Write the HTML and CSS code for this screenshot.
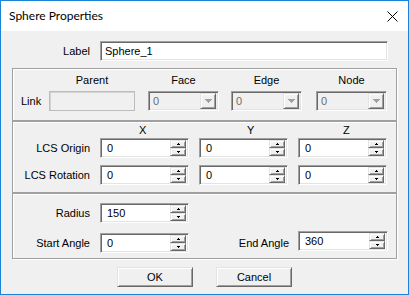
FILE: index.html
```
<!DOCTYPE html>
<html>
<head>
<meta charset="utf-8">
<title>Sphere Properties</title>
<link rel="stylesheet" href="styles.css">
</head>
<body>
<div class="window">
  <div class="titlebar">
    <span class="title">Sphere Properties</span>
    <svg class="close" width="11" height="11" viewBox="0 0 11 11"><path d="M0.5 0.5L10.5 10.5M10.5 0.5L0.5 10.5" stroke="#000" stroke-width="1" fill="none"/></svg>
  </div>
  <div class="client">
    <div class="label-row">
      <span class="rlabel">Label</span>
      <div class="edit sunken"><span class="val">Sphere_1</span></div>
    </div>

    <div class="group g-link">
      <div class="link-head">
        <span class="c-lbl"></span>
        <span class="c-parent hd">Parent</span>
        <span class="c-face hd">Face</span>
        <span class="c-edge hd">Edge</span>
        <span class="c-node hd">Node</span>
      </div>
      <div class="link-row">
        <span class="c-lbl link-lbl">Link</span>
        <div class="c-parent edit-dis"></div>
        <div class="c-face combo sunken"><span class="val">0</span><span class="dd raised"><svg width="7" height="4" viewBox="0 0 7 4"><path d="M0 0H7V1H6V2H5V3H4V4H3V3H2V2H1V1H0Z" fill="#a0a0a0"/></svg></span></div>
        <div class="c-edge combo sunken"><span class="val">0</span><span class="dd raised"><svg width="7" height="4" viewBox="0 0 7 4"><path d="M0 0H7V1H6V2H5V3H4V4H3V3H2V2H1V1H0Z" fill="#a0a0a0"/></svg></span></div>
        <div class="c-node combo sunken"><span class="val">0</span><span class="dd raised"><svg width="7" height="4" viewBox="0 0 7 4"><path d="M0 0H7V1H6V2H5V3H4V4H3V3H2V2H1V1H0Z" fill="#a0a0a0"/></svg></span></div>
      </div>
    </div>

    <div class="group g-lcs">
      <div class="lcs-head">
        <span></span>
        <span class="hx">X</span>
        <span class="hy">Y</span>
        <span class="hz">Z</span>
      </div>
      <div class="lcs-grid">
        <span class="rlabel">LCS Origin</span>
        <div class="spin sunken"><span class="val">0</span><span class="sbs"><span class="sb raised"><svg width="3" height="2" viewBox="0 0 3 2"><path d="M1 0H2V1H3V2H0V1H1Z"/></svg></span><span class="sb raised"><svg width="3" height="2" viewBox="0 0 3 2"><path d="M0 0H3V1H2V2H1V1H0Z"/></svg></span></span></div>
        <div class="spin sunken"><span class="val">0</span><span class="sbs"><span class="sb raised"><svg width="3" height="2" viewBox="0 0 3 2"><path d="M1 0H2V1H3V2H0V1H1Z"/></svg></span><span class="sb raised"><svg width="3" height="2" viewBox="0 0 3 2"><path d="M0 0H3V1H2V2H1V1H0Z"/></svg></span></span></div>
        <div class="spin sunken"><span class="val">0</span><span class="sbs"><span class="sb raised"><svg width="3" height="2" viewBox="0 0 3 2"><path d="M1 0H2V1H3V2H0V1H1Z"/></svg></span><span class="sb raised"><svg width="3" height="2" viewBox="0 0 3 2"><path d="M0 0H3V1H2V2H1V1H0Z"/></svg></span></span></div>

        <span class="rlabel">LCS Rotation</span>
        <div class="spin sunken"><span class="val">0</span><span class="sbs"><span class="sb raised"><svg width="3" height="2" viewBox="0 0 3 2"><path d="M1 0H2V1H3V2H0V1H1Z"/></svg></span><span class="sb raised"><svg width="3" height="2" viewBox="0 0 3 2"><path d="M0 0H3V1H2V2H1V1H0Z"/></svg></span></span></div>
        <div class="spin sunken"><span class="val">0</span><span class="sbs"><span class="sb raised"><svg width="3" height="2" viewBox="0 0 3 2"><path d="M1 0H2V1H3V2H0V1H1Z"/></svg></span><span class="sb raised"><svg width="3" height="2" viewBox="0 0 3 2"><path d="M0 0H3V1H2V2H1V1H0Z"/></svg></span></span></div>
        <div class="spin sunken"><span class="val">0</span><span class="sbs"><span class="sb raised"><svg width="3" height="2" viewBox="0 0 3 2"><path d="M1 0H2V1H3V2H0V1H1Z"/></svg></span><span class="sb raised"><svg width="3" height="2" viewBox="0 0 3 2"><path d="M0 0H3V1H2V2H1V1H0Z"/></svg></span></span></div>
      </div>
    </div>

    <div class="group g-sph">
      <span class="rlabel r1">Radius</span>
      <div class="spin sunken f1"><span class="val">150</span><span class="sbs"><span class="sb raised"><svg width="3" height="2" viewBox="0 0 3 2"><path d="M1 0H2V1H3V2H0V1H1Z"/></svg></span><span class="sb raised"><svg width="3" height="2" viewBox="0 0 3 2"><path d="M0 0H3V1H2V2H1V1H0Z"/></svg></span></span></div>
      <span class="rlabel r2">Start Angle</span>
      <div class="spin sunken f2"><span class="val">0</span><span class="sbs"><span class="sb raised"><svg width="3" height="2" viewBox="0 0 3 2"><path d="M1 0H2V1H3V2H0V1H1Z"/></svg></span><span class="sb raised"><svg width="3" height="2" viewBox="0 0 3 2"><path d="M0 0H3V1H2V2H1V1H0Z"/></svg></span></span></div>
      <span class="rlabel r3">End Angle</span>
      <div class="spin sunken f3"><span class="val">360</span><span class="sbs"><span class="sb raised"><svg width="3" height="2" viewBox="0 0 3 2"><path d="M1 0H2V1H3V2H0V1H1Z"/></svg></span><span class="sb raised"><svg width="3" height="2" viewBox="0 0 3 2"><path d="M0 0H3V1H2V2H1V1H0Z"/></svg></span></span></div>
    </div>

    <div class="buttons">
      <div class="btn raised">OK</div>
      <div class="btn raised">Cancel</div>
    </div>
  </div>
</div>
</body>
</html>
```

FILE: styles.css
```
* { box-sizing: border-box; }
html, body { margin: 0; padding: 0; }
body {
  width: 409px;
  height: 295px;
  overflow: hidden;
  background: #f0f0f0;
  font-family: "Liberation Sans", Arial, sans-serif;
  font-size: 11px;
  color: #000;
}
.window {
  width: 409px;
  height: 295px;
  border: 1px solid #1883d7;
  background: #f0f0f0;
  display: flex;
  flex-direction: column;
}
.titlebar {
  flex: none;
  height: 30px;
  background: #fff;
  display: flex;
  align-items: center;
  justify-content: space-between;
  padding: 0 10px 0 8px;
}
.title {
  font-family: Lato, "Liberation Sans", sans-serif;
  font-size: 12px;
  line-height: 14px;
}
.close { display: block; }
.client {
  flex: 1;
  padding: 10px 11px 0;
  display: flex;
  flex-direction: column;
}
.rlabel { text-align: right; white-space: nowrap; }

.sunken {
  border: 1px solid;
  border-color: #a0a0a0 #fff #fff #a0a0a0;
  box-shadow: inset 1px 1px 0 #696969, inset -1px -1px 0 #e3e3e3;
}
.raised {
  border: 1px solid;
  border-color: #e3e3e3 #696969 #696969 #e3e3e3;
  box-shadow: inset 1px 1px 0 #fff, inset -1px -1px 0 #a0a0a0;
  background: #f0f0f0;
}

.label-row {
  display: grid;
  grid-template-columns: 78px 288px;
  column-gap: 10px;
  align-items: center;
  height: 20px;
}
.edit {
  height: 20px;
  background: #fff;
  display: flex;
  align-items: center;
  padding: 1px 2px 1px 4px;
}
.val { line-height: 16px; white-space: nowrap; }

.group {
  border: 1px solid #a0a0a0;
  box-shadow: inset 1px 1px 0 #fff, 1px 1px 0 #fff;
}
.g-link {
  margin-top: 7px;
  height: 53px;
  padding-top: 5px;
}
.link-head, .link-row { display: flex; }
.link-head { height: 13px; line-height: 13px; margin-bottom: 4px; }
.link-row { height: 20px; align-items: center; }
.hd { text-align: center; }
.c-lbl { width: 36px; flex: none; }
.c-parent { width: 86px; flex: none; }
.c-face { width: 71px; flex: none; margin-left: 13px; }
.c-edge { width: 71px; flex: none; margin-left: 12px; }
.c-node { width: 71px; flex: none; margin-left: 14px; }
.link-lbl { padding-left: 8px; }
.edit-dis {
  height: 20px;
  background: #f0f0f0;
  border: 1px solid #bcbcbc;
  box-shadow: inset 1px 1px 0 #d4d4d4;
}
.combo {
  height: 20px;
  background: #f0f0f0;
  display: flex;
  align-items: center;
  padding: 2px;
}
.combo .val { flex: 1; color: #6d6d6d; padding-left: 2px; }
.dd {
  width: 16px;
  height: 16px;
  display: flex;
  align-items: center;
  justify-content: center;
  flex: none;
}
.dd svg { display: block; }

.g-lcs {
  height: 72px;
  padding-top: 2px;
}
.lcs-head, .lcs-grid {
  display: grid;
  grid-template-columns: 77px 89px 89px 89px;
  column-gap: 10px;
}
.lcs-head { height: 13px; line-height: 13px; margin-bottom: 1px; }
.hx { padding-left: 39px; }
.hy { padding-left: 48px; }
.hz { padding-left: 45px; }
.lcs-grid {
  grid-auto-rows: 20px;
  row-gap: 7px;
  align-items: center;
}

.spin {
  height: 20px;
  background: #fff;
  display: flex;
  align-items: center;
  padding: 2px;
}
.spin .val { flex: 1; padding-left: 4px; }
.sbs {
  width: 16px;
  height: 16px;
  flex: none;
  display: flex;
  flex-direction: column;
}
.sb {
  flex: 1;
  display: flex;
  align-items: center;
  justify-content: center;
}
.sb svg { display: block; }

.g-sph {
  height: 66px;
  padding: 9px 8px 0 0;
  display: grid;
  grid-template-columns: 77px 89px 1fr auto 90px;
  grid-template-rows: 20px 20px;
  column-gap: 10px;
  row-gap: 10px;
  align-items: center;
}
.r1 { grid-column: 1; grid-row: 1; }
.f1 { grid-column: 2; grid-row: 1; }
.r2 { grid-column: 1; grid-row: 2; }
.f2 { grid-column: 2; grid-row: 2; }
.r3 { grid-column: 4; grid-row: 2; margin-right: -1px; }
.f3 { grid-column: 5; grid-row: 2; margin-top: -2px; margin-bottom: 2px; }

.buttons {
  display: flex;
  justify-content: center;
  gap: 23px;
  margin-top: 8px;
}
.btn {
  width: 76px;
  height: 20px;
  display: flex;
  align-items: center;
  justify-content: center;
}
```
